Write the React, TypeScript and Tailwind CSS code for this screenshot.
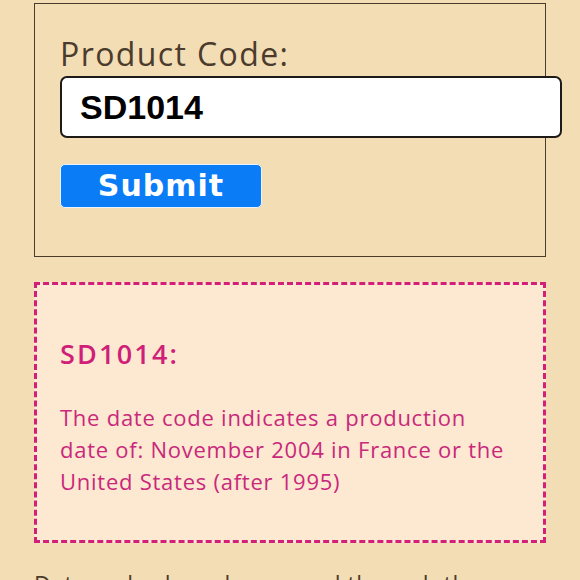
import React from 'react';

const App: React.FC = () => {
  return (
    <div className="w-[580px] h-[580px] overflow-hidden bg-[#f3ddb5] pl-[34px] pt-[3px] font-['Open_Sans','Noto_Sans',sans-serif]">
      <div className="w-[512px] h-[254px] border border-[#4b3b2c] pl-[25px] pt-[29px]">
        <label className="block text-[32px] leading-[42px] tracking-[1.4px] text-[#4b3b2c]">Product Code:</label>
        <div className="mt-[1px] w-[502px] h-[62px] bg-white border-2 border-[#1e1a17] rounded-[7px] flex items-center pl-[18px]">
          <span className="font-['Liberation_Sans',sans-serif] font-bold text-[34px] text-black">SD1014</span>
        </div>
        <button className="mt-[26px] w-[202px] h-[44px] bg-[#0a7cf6] border border-[#eaf2fb] rounded-[5px] flex items-center justify-center">
          <span className="font-['DejaVu_Sans',sans-serif] font-bold text-[30px] leading-none tracking-[1px] text-white">Submit</span>
        </button>
      </div>

      <div className="mt-[25px] w-[512px] h-[261px] border-[3px] border-dashed border-[#d31f78] bg-[#fde9d1] pl-[23px] pr-[10px] pt-[52px]">
        <h2 className="text-[27px] leading-[34px] font-semibold tracking-[2.2px] text-[#cf1f78]">SD1014:</h2>
        <p className="mt-[30px] text-[22px] leading-[32px] tracking-[0.75px] text-[#c9287c]">
          The date code indicates a production
          <br />
          date of: November 2004 in France or the
          <br />
          United States (after 1995)
        </p>
      </div>

      <p className="mt-[25px] w-[512px] text-[23px] leading-[32px] tracking-[0.5px] text-[#4b3b2c] whitespace-nowrap">
        Date codes have been used through the years and
      </p>
    </div>
  );
};

export default App;
